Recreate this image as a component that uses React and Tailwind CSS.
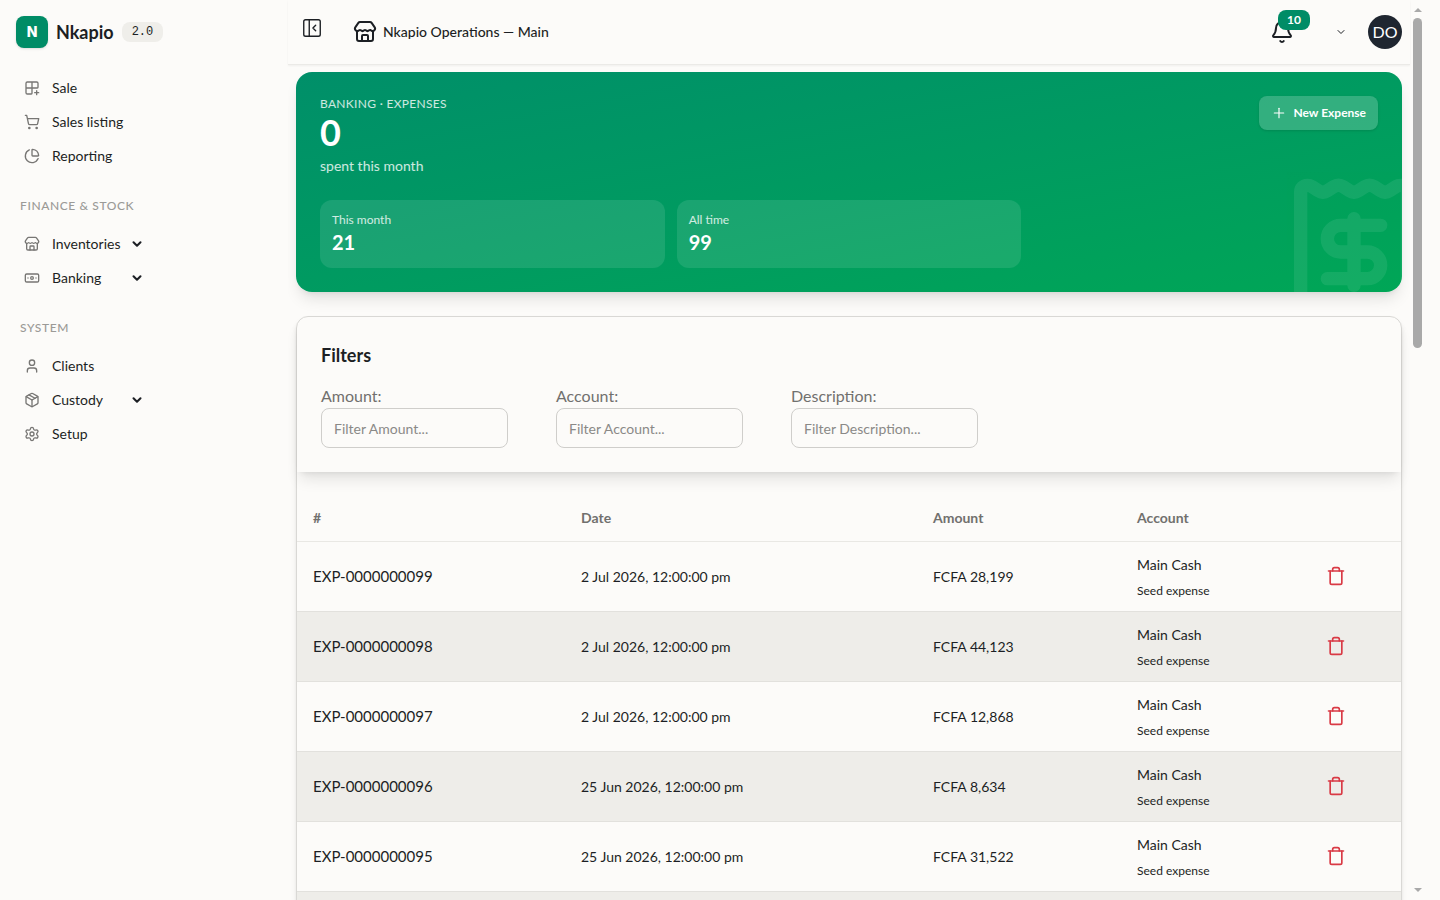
import React from 'react';
import {
  Banknote,
  Bell,
  ChartPie,
  ChevronDown,
  Grid2x2Plus,
  Package,
  PanelLeftClose,
  Plus,
  Settings,
  ShoppingCart,
  Store,
  Trash,
  User,
} from 'lucide-react';

const NAV = [
  {
    title: null,
    items: [
      { label: 'Sale', icon: Grid2x2Plus },
      { label: 'Sales listing', icon: ShoppingCart },
      { label: 'Reporting', icon: ChartPie },
    ],
  },
  {
    title: 'FINANCE & STOCK',
    items: [
      { label: 'Inventories', icon: Store, menu: true },
      { label: 'Banking', icon: Banknote, menu: true },
    ],
  },
  {
    title: 'SYSTEM',
    items: [
      { label: 'Clients', icon: User },
      { label: 'Custody', icon: Package, menu: true },
      { label: 'Setup', icon: Settings },
    ],
  },
];

const STATS = [
  { label: 'This month', value: '21' },
  { label: 'All time', value: '99' },
];

const FILTERS = ['Amount', 'Account', 'Description'];

const EXPENSES = [
  { id: 'EXP-0000000099', date: '2 Jul 2026, 12:00:00 pm', amount: 'FCFA 28,199' },
  { id: 'EXP-0000000098', date: '2 Jul 2026, 12:00:00 pm', amount: 'FCFA 44,123' },
  { id: 'EXP-0000000097', date: '2 Jul 2026, 12:00:00 pm', amount: 'FCFA 12,868' },
  { id: 'EXP-0000000096', date: '25 Jun 2026, 12:00:00 pm', amount: 'FCFA 8,634' },
  { id: 'EXP-0000000095', date: '25 Jun 2026, 12:00:00 pm', amount: 'FCFA 31,522' },
  { id: 'EXP-0000000094', date: '25 Jun 2026, 12:00:00 pm', amount: 'FCFA 17,240' },
];

function ReceiptMark({ className }) {
  return (
    <svg
      aria-hidden="true"
      viewBox="0 0 24 24"
      fill="none"
      stroke="currentColor"
      strokeWidth="2"
      strokeLinecap="round"
      strokeLinejoin="round"
      className={className}
    >
      <path d="M12 17V7" />
      <path d="M16 8h-6a2 2 0 0 0 0 4h4a2 2 0 0 1 0 4H8" />
      <path d="M4 3a1 1 0 0 1 1-1 1.3 1.3 0 0 1 .7.2l.933.6a1.3 1.3 0 0 0 1.4 0l.934-.6a1.3 1.3 0 0 1 1.4 0l.933.6a1.3 1.3 0 0 0 1.4 0l.933-.6a1.3 1.3 0 0 1 1.4 0l.934.6a1.3 1.3 0 0 0 1.4 0l.933-.6A1.3 1.3 0 0 1 19 2a1 1 0 0 1 1 1v18a1 1 0 0 1-1 1 1.3 1.3 0 0 1-.7-.2l-.933-.6a1.3 1.3 0 0 0-1.4 0l-.934.6a1.3 1.3 0 0 1-1.4 0l-.933-.6a1.3 1.3 0 0 0-1.4 0l-.933.6a1.3 1.3 0 0 1-1.4 0l-.934-.6a1.3 1.3 0 0 0-1.4 0l-.933.6a1.3 1.3 0 0 1-.7.2 1 1 0 0 1-1-1z" />
    </svg>
  );
}

function NavItem({ label, icon: Icon, menu }) {
  const content = (
    <>
      <Icon className="size-4 shrink-0 text-[#777674]" />
      <span className={menu ? 'w-[70px] text-left' : ''}>{label}</span>
      {menu && <ChevronDown className="-ml-1 size-3.5 shrink-0" strokeWidth={3.5} />}
    </>
  );
  const style = 'flex h-8 w-full items-center gap-3 rounded-md px-2';
  return (
    <li>
      {menu ? (
        <button type="button" aria-expanded="false" className={style}>
          {content}
        </button>
      ) : (
        <a href="#" className={style}>
          {content}
        </a>
      )}
    </li>
  );
}

function Sidebar() {
  return (
    <aside className="flex w-72 shrink-0 flex-col p-4">
      <div className="flex h-8 items-center gap-2">
        <span className="grid size-8 place-items-center rounded-lg bg-[#008c66] font-[Inter] text-sm font-extrabold text-white shadow-sm">
          N
        </span>
        <span className="text-lg font-bold">Nkapio</span>
        <span className="rounded-lg bg-[#efeeea] px-2.5 py-0.5 font-['Liberation_Mono',monospace] text-xs">
          2.0
        </span>
      </div>
      <nav className="mt-6 flex flex-col gap-[26px] text-sm">
        {NAV.map((group) => (
          <div key={group.title ?? 'main'}>
            {group.title && (
              <h2 className="mb-3.5 px-1 text-xs font-medium tracking-wider text-[#9b9a97]">
                {group.title}
              </h2>
            )}
            <ul className="flex flex-col gap-0.5">
              {group.items.map((item) => (
                <NavItem key={item.label} {...item} />
              ))}
            </ul>
          </div>
        ))}
      </nav>
    </aside>
  );
}

function Header() {
  return (
    <header className="flex h-[65px] shrink-0 items-center border-b border-[#ebeae7] pr-2 pl-[13px] shadow-xs">
      <button type="button" aria-label="Collapse sidebar" className="mb-2">
        <PanelLeftClose className="size-[22px]" strokeWidth={1.5} />
      </button>
      <div className="ml-[30px] flex items-center gap-1.5">
        <Store className="size-6" />
        <span className="text-sm font-medium">Nkapio Operations — Main</span>
      </div>
      <div className="ml-auto flex items-center">
        <button type="button" aria-label="Notifications" className="relative">
          <Bell className="size-6" />
          <span className="absolute -top-2.5 left-2 grid h-5 w-8 place-items-center rounded-lg bg-[#008c66] text-xs font-bold text-white">
            10
          </span>
        </button>
        <button type="button" aria-label="Account menu" className="ml-[41px] flex items-center gap-[21px]">
          <ChevronDown className="size-3" />
          <span className="grid size-[34px] place-items-center rounded-full bg-[#1f2630] text-base text-white">
            DO
          </span>
        </button>
      </div>
    </header>
  );
}

function Hero() {
  return (
    <section className="relative shrink-0 overflow-hidden rounded-2xl bg-linear-to-br from-[#008f69] to-[#00a656] p-6 text-white shadow-lg">
      <ReceiptMark className="absolute -right-8 -bottom-10 size-40 opacity-8" />
      <div className="flex items-start justify-between">
        <div>
          <p className="text-xs tracking-wide text-white/80">BANKING · EXPENSES</p>
          <p className="text-4xl font-bold">0</p>
          <p className="mt-1 text-sm text-white/80">spent this month</p>
        </div>
        <button
          type="button"
          className="flex items-center gap-1.5 rounded-lg bg-white/20 px-3 py-2 text-xs/[18px] font-bold shadow-sm"
        >
          <Plus className="size-4" strokeWidth={1.75} />
          New Expense
        </button>
      </div>
      <dl className="mt-6 grid grid-cols-3 gap-3">
        {STATS.map((s) => (
          <div key={s.label} className="rounded-xl bg-white/10 p-3">
            <dt className="text-xs text-white/80">{s.label}</dt>
            <dd className="text-xl/7 font-bold">{s.value}</dd>
          </div>
        ))}
      </dl>
    </section>
  );
}

function Filters() {
  return (
    <section className="rounded-t-xl p-6 shadow-lg">
      <h2 className="text-lg font-bold">Filters</h2>
      <div className="mt-[15px] grid grid-cols-[repeat(3,187px)] gap-x-12">
        {FILTERS.map((name) => (
          <div key={name}>
            <label htmlFor={name} className="block text-base/6 text-[#71706e]">
              {name}:
            </label>
            <input
              id={name}
              type="text"
              placeholder={`Filter ${name}...`}
              className="h-10 w-full rounded-lg border border-[#cfcecb] bg-transparent px-3 text-sm placeholder:text-[#8a8987]"
            />
          </div>
        ))}
      </div>
    </section>
  );
}

function ExpenseTable() {
  return (
    <table className="mt-6 w-full table-fixed text-left text-sm">
      <thead>
        <tr className="h-[45px] border-b border-[#e9e8e4] text-[#71706e]">
          <th className="w-[268px] px-4 font-bold">#</th>
          <th className="w-[352px] px-4 font-bold">Date</th>
          <th className="w-[204px] px-4 font-bold">Amount</th>
          <th className="w-[191px] px-4 font-bold">Account</th>
          <th aria-label="Actions" />
        </tr>
      </thead>
      <tbody>
        {EXPENSES.map((e) => (
          <tr key={e.id} className="h-[70px] border-b border-[#e2e1dd] even:bg-[#eeede9]">
            <td className="px-4 pt-0.5 text-[15px]">{e.id}</td>
            <td className="px-4 pt-0.5">{e.date}</td>
            <td className="px-4 pt-0.5">{e.amount}</td>
            <td className="px-4 pt-0.5">
              <div className="leading-6">Main Cash</div>
              <div className="mt-1 text-xs/5">Seed expense</div>
            </td>
            <td className="px-3.5">
              <button type="button" aria-label={`Delete ${e.id}`} className="flex text-[#d93a45]">
                <Trash className="size-5" />
              </button>
            </td>
          </tr>
        ))}
      </tbody>
    </table>
  );
}

function ScrollTrack() {
  return (
    <div aria-hidden="true" className="mr-[15px] flex w-[15px] shrink-0 flex-col items-center py-2 text-[#a9a9a9]">
      <svg viewBox="0 0 8 4" className="h-1 w-2" fill="currentColor">
        <path d="M4 0 8 4H0z" />
      </svg>
      <div className="mt-1.5 h-[330px] w-[9px] rounded-full bg-[#a9a9a9]" />
      <svg viewBox="0 0 8 4" className="mt-auto h-1 w-2" fill="currentColor">
        <path d="M0 0h8L4 4z" />
      </svg>
    </div>
  );
}

export default function App() {
  return (
    <div className="flex h-screen overflow-hidden bg-[#fcfbf9] font-[Lato,sans-serif] text-[#1c1f24]">
      <Sidebar />
      <div className="flex min-w-0 flex-1 flex-col">
        <Header />
        <main className="flex min-h-0 flex-1 flex-col gap-6 overflow-x-hidden overflow-y-auto px-2 pt-[7px] [scrollbar-width:none]">
          <Hero />
          <div className="shrink-0 rounded-t-xl border border-[#d9d8d5] shadow-md">
            <Filters />
            <ExpenseTable />
          </div>
        </main>
      </div>
      <ScrollTrack />
    </div>
  );
}
